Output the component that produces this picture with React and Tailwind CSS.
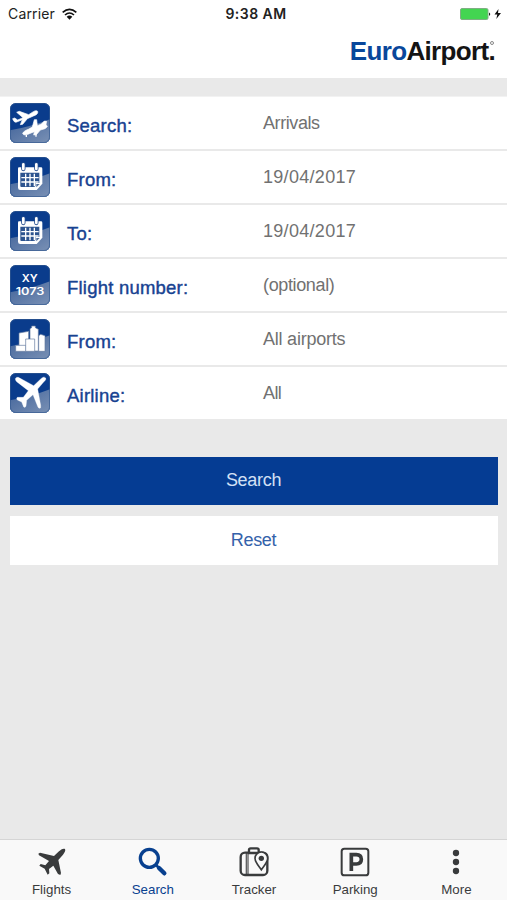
import React from 'react'
import clsx from 'clsx'

// rounded blue tile behind every form icon
const Tile = ({ children }) => {
    return (
        <svg width="40" height="40" viewBox="0 0 120 120" className="shrink-0">
            <defs>
                <linearGradient id="shine" x1="0" y1="0" x2="1" y2="1">
                    <stop offset="0" stopColor="#41639a" />
                    <stop offset="1" stopColor="#7a91b5" />
                </linearGradient>
                <clipPath id="tile">
                    <rect x="0" y="0" width="120" height="120" rx="17" />
                </clipPath>
            </defs>
            <g clipPath="url(#tile)">
                <rect width="120" height="120" fill="#0a3c8c" />
                <path d="M0 82Q60 72 120 49V120H0Z" fill="url(#shine)" />
            </g>
            <rect x="1.5" y="1.5" width="117" height="117" rx="16" fill="none" stroke="#33598f" strokeWidth="2" />
            {children}
        </svg>
    )
}

const FlightsIcon = () => (
    <Tile>
        <path fill="#fff" stroke="#fff" strokeWidth="2" strokeLinejoin="round" d="M8 47L14 45L23 51L39 44L20 28L28 25L56 35L70 26C78 21 85 23 83 29C82 34 76 37 70 39L52 47L38 64L31 65L37 50L20 57C14 59 11 55 8 47Z" />
        <path fill="#fff" stroke="#fff" strokeWidth="2" strokeLinejoin="round" d="M38 91C40 86 48 81 55 79L67 72L73 50L80 50L82 68L94 63L103 54L110 55L108 64L112 71L105 77L91 81L79 95L71 96L73 86L58 92C50 96 39 98 38 91Z" />
        <path d="M49 95V102M78 93V101" stroke="#fff" strokeWidth="4" />
    </Tile>
)

const CalendarIcon = () => (
    <Tile>
        <path fill="#fff" d="M27 31H93Q97 31 97 35V80L80 99H31Q24 99 24 92V35Q24 31 27 31Z" />
        <path d="M40 22V36M79 22V36" stroke="#264f8f" strokeWidth="13" strokeLinecap="round" />
        <path d="M40 22V36M79 22V36" stroke="#fff" strokeWidth="8" strokeLinecap="round" />
        <path fill="#2d548f" d="M31 47H88V76L74 90H34Q31 90 31 87Z" />
        <path d="M34 62H86M34 75H86M47 50V88M60 50V88M73 50V88" stroke="#fff" strokeWidth="4" />
        <path fill="#fff" d="M76 78H94L77 96Z" />
        <path fill="#4d6c9b" d="M79 81H89L79 91Z" />
    </Tile>
)

const NumberIcon = () => (
    <Tile>
        <g fill="#fff" fontFamily="Inter, sans-serif" fontWeight="600" textAnchor="middle">
            <text x="59" y="52" fontSize="31" textLength="48" lengthAdjust="spacingAndGlyphs">XY</text>
            <text x="60" y="91" fontSize="31" textLength="86" lengthAdjust="spacingAndGlyphs">1073</text>
        </g>
    </Tile>
)

const CityIcon = () => (
    <Tile>
        <g fill="#fff" stroke="#60799f" strokeWidth="2">
            <path d="M27 42L56 37V96H27Z" />
            <path d="M60 29L65 26V21H76V26L85 31V96H60Z" />
            <path d="M86 50L92 46L105 50V97H86Z" />
            <path d="M17 79H48V97H17Z" />
            <path d="M47 60H74V97H47Z" />
        </g>
    </Tile>
)

const AirlineIcon = () => (
    <Tile>
        <path
            fill="#fff"
            stroke="#fff"
            strokeWidth="1"
            d="M107 15C103 10 97 13 93 17L71 38L25 13Q18 11 16 17Q16 22 20 26L55 53L40 73L22 73Q18 77 22 81L35 87L41 102Q45 105 48 100L50 82L69 65L84 103Q88 108 92 104V97L83 48L101 27Q110 20 107 15Z"
        />
    </Tile>
)

const rows = [
    { label: "Search:", value: "Arrivals", Icon: FlightsIcon, tracking: "tracking-[-0.42px]" },
    { label: "From:", value: "19/04/2017", Icon: CalendarIcon, tracking: "tracking-[0.3px]" },
    { label: "To:", value: "19/04/2017", Icon: CalendarIcon, tracking: "tracking-[0.3px]" },
    { label: "Flight number:", value: "(optional)", Icon: NumberIcon, tracking: "tracking-[-0.36px]" },
    { label: "From:", value: "All airports", Icon: CityIcon, tracking: "tracking-[-0.22px]" },
    { label: "Airline:", value: "All", Icon: AirlineIcon, tracking: "tracking-[-0.6px]" },
];

const PlaneTab = () => (
    <svg width="28" height="28" viewBox="0 0 84 84">
        <path
            fill="currentColor"
            d="M81 3C76 0 68 5 63 10L48 24L6 14L1 17L3 22L33 39L22 52L8 48L4 53L20 62L29 80L34 76L33 63L46 53L60 78L67 81L69 75L61 36L75 20C79 15 84 8 81 3Z"
        />
    </svg>
)

const SearchTab = () => (
    <svg width="30" height="30" viewBox="0 0 90 90" fill="none" stroke="currentColor">
        <circle cx="34" cy="34" r="27" strokeWidth="10" />
        <path d="M54 54L63 63" strokeWidth="8" />
        <path d="M63 63L79 79" strokeWidth="13" strokeLinecap="round" />
    </svg>
)

const TrackerTab = () => (
    <svg width="30" height="30" viewBox="0 0 90 90" fill="none" stroke="currentColor">
        <rect x="5" y="17" width="80" height="67" rx="13" strokeWidth="7" />
        <path d="M22 18V83M27 18V83" strokeWidth="4" opacity="0.8" />
        <path d="M30 18V8Q30 4 35 4H54Q59 4 59 8V18Z" strokeWidth="7" fill="#f9f9f9" />
        <path d="M67 68C61 59 48 47 48 34A19 19 0 0 1 86 34C86 47 73 59 67 68Z" strokeWidth="5" fill="#f9f9f9" />
        <circle cx="67" cy="34" r="8" fill="currentColor" stroke="none" />
    </svg>
)

const ParkingTab = () => (
    <svg width="30" height="30" viewBox="0 0 90 90">
        <rect x="5" y="5" width="80" height="80" rx="8" fill="none" stroke="currentColor" strokeWidth="6" />
        <path fill="none" stroke="currentColor" strokeWidth="11" d="M34 72V23H49Q64 23 64 37T49 51H34" />
    </svg>
)

const MoreTab = () => (
    <svg width="30" height="30" viewBox="0 0 90 90" fill="currentColor">
        <circle cx="45" cy="18" r="9.5" />
        <circle cx="45" cy="45" r="9.5" />
        <circle cx="45" cy="72" r="9.5" />
    </svg>
)

const tabs = [
    { name: "Flights", Icon: PlaneTab },
    { name: "Search", Icon: SearchTab, active: true },
    { name: "Tracker", Icon: TrackerTab },
    { name: "Parking", Icon: ParkingTab },
    { name: "More", Icon: MoreTab },
];

const StatusBar = () => {
    return (
        <div className="h-[27px] grid grid-cols-[1fr_auto_1fr] items-center pl-2 pr-[5px] font-[Inter,sans-serif] text-[#222]">
            <div className="flex items-center gap-[7px]">
                <span className="text-[14px] tracking-[0.15px]">Carrier</span>
                <svg width="15" height="12" viewBox="0 0 45 36" fill="none" stroke="#111" strokeWidth="5">
                    <path d="M2 13Q22.500 -5 43 13M9 21Q22.500 9 36 21" />
                    <path d="M14 26Q22.500 19 31 26L22.500 35Z" fill="#111" stroke="none" />
                </svg>
            </div>
            <span className="pl-[2px] text-[14px] font-semibold tracking-[0.45px]">9:38 AM</span>
            <svg width="42" height="14" viewBox="0 0 42 14" className="justify-self-end">
                <rect x="0.500" y="1.500" width="27.500" height="11" rx="1.500" fill="#43d551" stroke="#7fae83" />
                <path d="M29 5.500Q31.500 7 29 9Z" fill="#222" />
                <path d="M38.500 2L34.500 7.500H37.300L36.300 12L41 6H38Z" fill="#111" />
            </svg>
        </div>
    )
}

const App = () => {
    return (
        <div className="h-[900px] w-full flex flex-col overflow-hidden bg-[#e9e9e9] font-['Liberation_Sans',sans-serif]">
            <header className="h-[78px] shrink-0 bg-white">
                <StatusBar />
                <div className="h-[48px] flex justify-end pr-[12px] text-[26px] leading-[48px] font-bold tracking-[-0.66px]">
                    <span className="text-[#09479b]">Euro</span>
                    <span className="text-[#141414]">Airport</span>
                    <span className="relative text-[#141414]">
                        .
                        <span className="absolute left-[2px] top-[14px] size-1 rounded-full border border-[#888]"></span>
                    </span>
                </div>
            </header>

            <main className="grow">
                <div className="mt-[18px] bg-white border-t border-[#f2f2f2]">
                    {
                        rows.map(({ label, value, Icon, tracking }, index) =>
                            <div key={index} className="h-[54px] flex items-center pl-[9.5px] border-b-2 border-[#e9e9e9]">
                                <Icon />
                                <span
                                    className="
                                        w-[196px] ml-[17.5px] pt-[5px]
                                        text-[18.5px] tracking-[0.22px]
                                        text-[#174291]
                                        [-webkit-text-stroke:0.4px_#174291]
                                    ">
                                    {label}
                                </span>
                                <span className={clsx("pt-px text-[18px] text-[#717171]", tracking)}>{value}</span>
                            </div>
                        )}
                </div>

                <div className="mt-[36px] pl-[10px] pr-[9px] flex flex-col gap-[11px] text-[18px] tracking-[-0.3px]">
                    <button className="h-12 pr-px pb-px bg-[#053c93] text-[#d3e0f5]">Search</button>
                    <button className="h-[49px] pr-px pb-px bg-white text-[#3462aa]">Reset</button>
                </div>
            </main>

            <nav className="h-[61px] shrink-0 grid grid-cols-5 pl-px bg-[#f9f9f9] border-t border-[#d5d5d5]">
                {
                    tabs.map(({ name, Icon, active }) =>
                        <div
                            key={name}
                            className={clsx(
                                "flex flex-col items-center pt-[7px]",
                                active ? "text-[#08408f]" : "text-[#393b3c]"
                            )}>
                            <div className="h-[30px] flex items-center">
                                <Icon />
                            </div>
                            <span className="mt-[5px] text-[13.3px] leading-4">{name}</span>
                        </div>
                    )}
            </nav>
        </div>
    )
}

export default App
